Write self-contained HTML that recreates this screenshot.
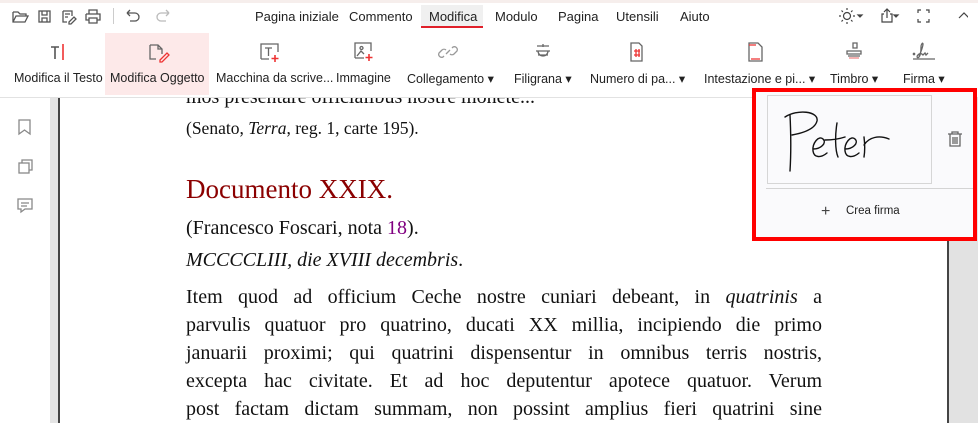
<!DOCTYPE html>
<html><head><meta charset="utf-8"><style>
*{margin:0;padding:0;box-sizing:border-box}
body{width:978px;height:423px;overflow:hidden;background:#fff;font-family:"Liberation Sans",sans-serif;position:relative;color:#222}
.abs{position:absolute}
.menu{top:9px;font-size:13px;color:#222}
.lbl{top:71px;font-size:12.5px;color:#222;white-space:nowrap}
.doc{font-family:"Liberation Serif",serif;color:#111;position:absolute;left:186px;width:636px;font-size:20px}
.j{text-align:justify;text-align-last:justify}
svg{position:absolute}
.top{z-index:5}
</style></head><body>
<div class="doc" style="top:86px;font-size:20px">mos presentare officialibus nostre monete...</div>
<div class="abs" style="left:0;top:0;width:978px;height:97px;background:#fff;z-index:2"></div>
<div class="abs top" style="left:0;top:0;width:978px;height:3px;background:#f6eeec"></div>
<svg class="top" style="left:12px;top:8px" width="100" height="18" fill="none" stroke="#555" stroke-width="1.3">
<path d="M1 4h5l2 2h6v2M1 4v10h12l3-6H4l-3 6"/>
<rect x="27" y="3" width="11" height="11"/><path d="M30 3v4h5V3M30 14v-4h5v4"/>
<path d="M51 3h9v5M51 3v11h4M53 6h5M53 9h3M57 14l5-5 2 2-5 5h-2z"/>
<path d="M77 6V2h8v4M74 6h14v6h-3M77 12h-3V6M77 10h8v5h-8z"/>
</svg>
<div class="abs top" style="left:113px;top:8px;width:1px;height:16px;background:#ccc"></div>
<svg class="top" style="left:124px;top:8px" width="50" height="18" fill="none" stroke-width="1.3"><path stroke="#555" d="M3 5h8a4 4 0 010 8H6M3 5l3-3M3 5l3 3"/><path stroke="#bbb" d="M45 5h-8a4 4 0 000 8h5M45 5l-3-3M45 5l-3 3"/></svg>
<div class="abs top" style="left:421px;top:5px;width:62px;height:21px;background:#f0f0f0"></div>
<div class="abs menu top" style="left:255px">Pagina iniziale</div>
<div class="abs menu top" style="left:349px">Commento</div>
<div class="abs menu top" style="left:429px">Modifica</div>
<div class="abs top" style="left:421px;top:26px;width:62px;height:2px;background:#e0202a"></div>
<div class="abs menu top" style="left:495px">Modulo</div>
<div class="abs menu top" style="left:558px">Pagina</div>
<div class="abs menu top" style="left:616px">Utensili</div>
<div class="abs menu top" style="left:680px">Aiuto</div>
<svg class="top" style="left:838px;top:7px" width="130" height="18" fill="none" stroke="#444" stroke-width="1.2">
<circle cx="9" cy="9" r="3.5"/><path d="M9 1v2M9 15v2M1 9h2M15 9h2M3.5 3.5l1.4 1.4M13.1 13.1l1.4 1.4M3.5 14.5l1.4-1.4M13.1 4.9l1.4-1.4"/>
<path d="M20 8l2 2 2-2z" fill="#444"/>
<path d="M46 7h-2v8h10V7h-2M49 11V2M46 5l3-3 3 3"/><path d="M56 8l2 2 2-2z" fill="#444"/>
<path d="M80 6V3h3M88 3h3v3M91 12v3h-3M83 15h-3v-3"/>
<path d="M121 11l5-5 5 5"/>
</svg>
<div class="abs top" style="left:105px;top:33px;width:104px;height:62px;background:#fde9e9"></div>
<div class="abs top" style="left:0;top:97px;width:978px;height:1px;background:#e2e2e2"></div>
<svg class="top" style="left:0;top:40px" width="978" height="28" fill="none" stroke="#666" stroke-width="1.3">
<path d="M51 7h8M55 7v12" stroke="#555" stroke-width="1.6"/><path d="M63 4v16" stroke="#e33" stroke-width="1.6"/>
<path d="M150 5h8l4 4v5M150 5v14h6M162 9h-4V5"/><path d="M160 20l7-7 2 2-7 7h-2z" stroke="#e33"/>
<path d="M261 19V4h17v8M261 19h8M265 8h7M268.5 8v8"/><path d="M275 15v7M271.5 18.5h7" stroke="#e33" stroke-width="1.6"/>
<path d="M355 18V3h16v8M355 18h9M357 16l4-5 3 3M360 8a1.5 1.5 0 103 0 1.5 1.5 0 10-3 0"/><path d="M369 14v7M365.5 17.5h7" stroke="#e33" stroke-width="1.6"/>
<path d="M444 16l-1 1a3 3 0 01-4-4l3-3a3 3 0 014 0M452 8l1-1a3 3 0 014 4l-3 3a3 3 0 01-4 0M446 14l4-4" stroke="#999"/>
<path d="M537 6h12M536 11h14M543 4v3M538 11a5 5 0 0010 0M538 15h10"/>
<path d="M631 3h8l3 3v15h-11z"/><path d="M634 11h6M634 15h6M636 9v8M639 9v8" stroke="#e33"/>
<path d="M749 3h9l4 4v14h-13z"/><path d="M749 5h7M751 19h9" stroke="#e33"/>
<path d="M853 3h4v5h-4zM847 14v-3h14v3zM848 16h12" /><path d="M849 18h10" stroke="#e88"/>
<path d="M913 13l2 2M915 13l-2 2M919 16c2-4 4-10 4-12s-2 0-2 3 0 8-2 10-3-1 0-3c2-1 3 0 4 1l2-2 1 2 2-2M913 19h22"/>
</svg>
<div class="abs lbl top" style="left:14px">Modifica il Testo</div>
<div class="abs lbl top" style="left:110px">Modifica Oggetto</div>
<div class="abs lbl top" style="left:216px">Macchina da scrive...</div>
<div class="abs lbl top" style="left:336px">Immagine</div>
<div class="abs lbl top" style="left:407px">Collegamento ▾</div>
<div class="abs lbl top" style="left:514px">Filigrana ▾</div>
<div class="abs lbl top" style="left:590px">Numero di pa... ▾</div>
<div class="abs lbl top" style="left:704px">Intestazione e pi... ▾</div>
<div class="abs lbl top" style="left:830px">Timbro ▾</div>
<div class="abs lbl top" style="left:903px">Firma ▾</div>
<div class="abs" style="left:50px;top:98px;width:8px;height:325px;background:#e4e4e4"></div>
<div class="abs" style="left:58px;top:98px;width:2px;height:325px;background:#444"></div>
<div class="abs" style="left:947px;top:98px;width:2px;height:325px;background:#444"></div>
<div class="abs" style="left:949px;top:98px;width:29px;height:325px;background:#e2e2e2"></div>
<svg style="left:16px;top:118px" width="20" height="100" fill="none" stroke="#888" stroke-width="1.3">
<path d="M3 2h11v14l-5.5-4L3 16z"/>
<rect x="3" y="45" width="10" height="10"/><path d="M6 45v-3h10v10h-3"/>
<path d="M2 81h14v10H9l-4 3v-3H2z M5 85h8M5 88h6"/>
</svg>
<div class="doc" style="top:118px;font-size:17.5px">(Senato, <i>Terra</i>, reg. 1, carte 195).</div>
<div class="doc" style="top:174px;font-size:27px;color:#8b0000">Documento XXIX.</div>
<div class="doc" style="top:217px">(Francesco Foscari, nota <span style="color:#800080">18</span>).</div>
<div class="doc" style="top:249px"><i>MCCCCLIII, die XVIII decembris</i>.</div>
<div class="doc j" style="top:286px">Item quod ad officium Ceche nostre cuniari debeant, in <i>quatrinis</i> a</div>
<div class="doc j" style="top:314px">parvulis quatuor pro quatrino, ducati XX millia, incipiendo die primo</div>
<div class="doc j" style="top:342px">januarii proximi; qui quatrini dispensentur in omnibus terris nostris,</div>
<div class="doc j" style="top:370px">excepta hac civitate. Et ad hoc deputentur apotece quatuor. Verum</div>
<div class="doc j" style="top:398px">post factam dictam summam, non possint amplius fieri quatrini sine</div>
<div class="abs top" style="left:752px;top:88px;width:225px;height:153px;border:4px solid #f00;background:#fafafc"></div>
<div class="abs top" style="left:767px;top:95px;width:165px;height:89px;border:1px solid #d6d6d6;background:#fafafc"></div>
<div class="abs top" style="left:766px;top:188px;width:207px;height:1px;background:#d4d4d4"></div>
<svg class="top" style="left:767px;top:95px" width="165" height="89" fill="none" stroke="#111" stroke-width="1.4" stroke-linecap="round">
<path d="M23 20C24 40 24 60 23 76"/>
<path d="M18 22C30 14 52 16 50 26C48 34 36 38 25 40"/>
<path d="M46 54C54 54 60 48 56 44C52 40 45 48 46 56C47 63 54 63 60 58"/>
<path d="M70 28C68 40 68 55 71 62M58 45C64 45 72 44 78 42"/>
<path d="M78 54C86 54 92 48 88 44C84 40 77 48 78 56C79 63 86 63 92 58"/>
<path d="M97 42C98 50 98 56 97 62M97 50C102 42 112 40 122 44"/>
</svg>
<svg class="top" style="left:946px;top:130px" width="18" height="18" fill="none" stroke="#666" stroke-width="1.3"><path d="M2 4h14M6 4V2h6v2M4 4v12h10V4M7 7v7M9 7v7M11 7v7"/></svg>
<div class="abs top" style="left:821px;top:203px;font-size:16px;color:#444">+</div>
<div class="abs top" style="left:846px;top:205px;font-size:11.5px;color:#222">Crea firma</div>
</body></html>
